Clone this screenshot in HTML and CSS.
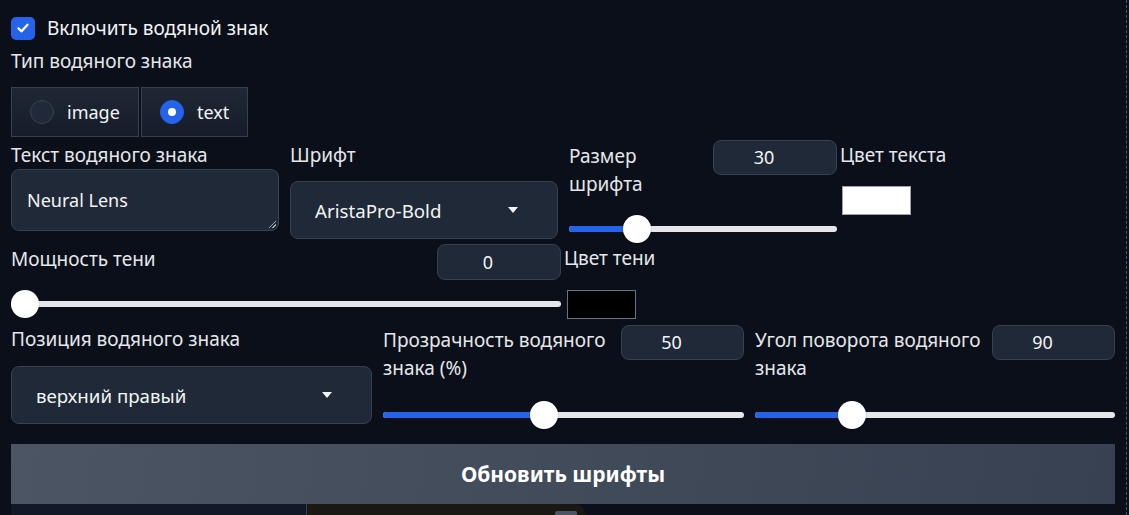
FILE: index.html
```html
<!DOCTYPE html>
<html lang="ru">
<head>
<meta charset="utf-8">
<title>Водяной знак</title>
<link rel="stylesheet" href="styles.css">
</head>
<body>
<div class="page">
  <label class="check-row">
    <span class="checkbox"><svg width="14" height="14" viewBox="0 0 14 14"><path d="M2.5 7.4 L5.6 10.3 L11.5 3.8" fill="none" stroke="#fff" stroke-width="2.4" stroke-linecap="round" stroke-linejoin="round"/></svg></span>
    <span class="check-text">Включить водяной знак</span>
  </label>

  <div class="type-block">
    <div class="label">Тип водяного знака</div>
    <div class="radio-group">
      <div class="radio-item"><span class="radio"></span><span class="radio-text">image</span></div>
      <div class="radio-item"><span class="radio checked"></span><span class="radio-text">text</span></div>
    </div>
  </div>

  <div class="row row2">
    <div class="col">
      <div class="label">Текст водяного знака</div>
      <div class="textarea">Neural Lens<span class="grip"></span></div>
    </div>
    <div class="col">
      <div class="label">Шрифт</div>
      <div class="dropdown dd-font"><span>AristaPro-Bold</span><span class="arrow"></span></div>
    </div>
    <div class="col">
      <div class="slider-head">
        <div class="label label-wrap">Размер шрифта</div>
        <div class="num">30</div>
      </div>
      <div class="slider slider-r2"><div class="fill" style="width:68px"></div><div class="thumb" style="left:68px"></div></div>
    </div>
    <div class="col color-col">
      <div class="label">Цвет текста</div>
      <div class="swatch white sw-r2"></div>
    </div>
  </div>

  <div class="row row3">
    <div class="col">
      <div class="slider-head">
        <div class="label label-wrap">Мощность тени</div>
        <div class="num">0</div>
      </div>
      <div class="slider slider-r3"><div class="fill" style="width:14px"></div><div class="thumb" style="left:14px"></div></div>
    </div>
    <div class="col color-col">
      <div class="label">Цвет тени</div>
      <div class="swatch black sw-r3"></div>
    </div>
  </div>

  <div class="row row4">
    <div class="col">
      <div class="label">Позиция водяного знака</div>
      <div class="dropdown dd-pos"><span>верхний правый</span><span class="arrow"></span></div>
    </div>
    <div class="col">
      <div class="slider-head">
        <div class="label label-wrap">Прозрачность водяного знака (%)</div>
        <div class="num">50</div>
      </div>
      <div class="slider slider-r4"><div class="fill" style="width:161px"></div><div class="thumb" style="left:161px"></div></div>
    </div>
    <div class="col">
      <div class="slider-head">
        <div class="label label-wrap">Угол поворота водяного знака</div>
        <div class="num">90</div>
      </div>
      <div class="slider slider-r4"><div class="fill" style="width:97px"></div><div class="thumb" style="left:97px"></div></div>
    </div>
  </div>

  <button class="btn">Обновить шрифты</button>

  <div class="bottom">
    <div class="bottom-left"></div>
    <div class="bottom-mid"><span class="bottom-chip"></span></div>
  </div>
</div>
</body>
</html>
```

FILE: styles.css
```css
* { box-sizing: border-box; }
html, body { margin: 0; padding: 0; }
body {
  background: #0b0f19;
  font-family: "Noto Sans", "Open Sans", sans-serif;
  font-size: 18px;
  color: #e5e7eb;
  height: 515px;
  overflow: hidden;
}
.page {
  width: 1127px;
  height: 515px;
  padding: 14px 11px 0 11px;
  border-right: 1px dashed #4b5563;
  display: flex;
  flex-direction: column;
}
.label {
  font-size: 19px;
  line-height: 28px;
  color: #e5e7eb;
  white-space: nowrap;
}
.label-wrap { white-space: normal; }

.check-row {
  display: flex;
  align-items: center;
  height: 28px;
}
.checkbox {
  width: 24px;
  height: 23px;
  border-radius: 5px;
  background: #2563eb;
  display: flex;
  align-items: center;
  justify-content: center;
  margin-right: 12px;
}
.check-text { color: #f3f4f6; font-size: 19px; line-height: 28px; }

.type-block { margin-top: 5px; }
.radio-group {
  display: flex;
  gap: 2px;
  margin-top: 12px;
}
.radio-item {
  height: 50px;
  display: flex;
  align-items: center;
  border: 1px solid #374151;
  background: linear-gradient(to bottom, #1f2735, #161c29);
  padding: 0 18px 0 18px;
}
.radio-item:first-child { width: 128px; }
.radio-item:last-child { width: 107px; }
.radio {
  width: 24px;
  height: 24px;
  border-radius: 50%;
  background: #1f2937;
  border: 1px solid #374151;
  margin-right: 13px;
  flex: none;
}
.radio.checked {
  background: #2563eb;
  border-color: #2563eb;
  position: relative;
}
.radio.checked::after {
  content: "";
  position: absolute;
  left: 7px;
  top: 7px;
  width: 8px;
  height: 8px;
  border-radius: 50%;
  background: #fff;
}
.radio-text { color: #f3f4f6; }

.row { display: grid; }
.row2 {
  margin-top: 3px;
  grid-template-columns: 268px 268px 268px 1fr;
  column-gap: 11px;
}
.row3 {
  margin-top: 1px;
  grid-template-columns: 550px 1fr;
  column-gap: 3px;
}
.row4 {
  margin-top: 6px;
  grid-template-columns: 361px 361px 1fr;
  column-gap: 11px;
}
.col { display: flex; flex-direction: column; }
.row2 .col .label { margin-top: 1px; }
.row2 .color-col { margin-left: -8px; }

.textarea {
  position: relative;
  height: 62px;
  background: #1f2937;
  border: 1px solid #374151;
  border-radius: 8px;
  padding: 0 15px;
  line-height: 60px;
  color: #f3f4f6;
}
.grip {
  position: absolute;
  right: 2px;
  bottom: 2px;
  width: 7px;
  height: 7px;
  background: linear-gradient(135deg, transparent 45%, #9ca3af 46%, #9ca3af 54%, transparent 55%, transparent 70%, #9ca3af 71%, #9ca3af 79%, transparent 80%);
}
.dropdown {
  height: 58px;
  background: #1f2937;
  border: 1px solid #374151;
  border-radius: 8px;
  padding: 0 39px 0 24px;
  display: flex;
  align-items: center;
  justify-content: space-between;
  color: #f3f4f6;
  font-size: 18.7px;
}
.dd-font { margin-top: 12px; }
.dd-pos { margin-top: 13px; }
.arrow {
  width: 0;
  height: 0;
  border-left: 5px solid transparent;
  border-right: 5px solid transparent;
  border-top: 6px solid #f3f4f6;
}

.slider-head {
  display: flex;
  justify-content: space-between;
  align-items: flex-start;
}
.slider-head .label { padding-top: 1px; padding-right: 8px; }
.num {
  flex: none;
  width: 124px;
  height: 35px;
  background: #1f2937;
  border: 1px solid #374151;
  border-radius: 8px;
  text-align: center;
  line-height: 33px;
  color: #f3f4f6;
  padding-right: 22px;
}
.row3 .num { height: 36px; line-height: 34px; }
.row4 .num { width: 123px; }

.slider {
  position: relative;
  height: 28px;
}
.slider::before {
  content: "";
  position: absolute;
  left: 0;
  right: 0;
  top: 11px;
  height: 6px;
  border-radius: 3px;
  background: #e5e7eb;
}
.fill {
  position: absolute;
  left: 0;
  top: 11px;
  height: 6px;
  border-radius: 3px;
  background: #2563eb;
}
.thumb {
  position: absolute;
  top: 0;
  width: 28px;
  height: 28px;
  margin-left: -14px;
  border-radius: 50%;
  background: #fff;
  box-shadow: 0 1px 2px rgba(0,0,0,0.3);
}
.slider-r2 { margin-top: 17px; }
.slider-r3 { margin-top: 10px; }
.slider-r4 { margin-top: 19px; }

.swatch {
  width: 69px;
  height: 29px;
  border: 1px solid #9ca3af;
  margin-left: 2px;
}
.swatch.white { background: #fff; }
.swatch.black { background: #000; border-color: #6b7280; }
.sw-r2 { margin-top: 17px; }
.sw-r3 { margin-top: 18px; margin-left: 3px; }

.btn {
  margin-top: 15px;
  height: 60px;
  width: 100%;
  border: none;
  background: linear-gradient(100deg, #4b5563, #374151);
  color: #fff;
  font-family: inherit;
  font-size: 21px;
  font-weight: 700;
  padding: 0;
}

.bottom {
  display: flex;
  height: 11px;
}
.bottom-left {
  width: 296px;
  background: #111827;
  border-right: 1px solid #374151;
}
.bottom-mid {
  position: relative;
  width: 278px;
  background: #1a1812;
  border-top-right-radius: 10px;
}
.bottom-chip {
  position: absolute;
  right: 8px;
  bottom: 0;
  width: 22px;
  height: 4px;
  background: #4b5563;
  border-radius: 2px 2px 0 0;
}
```
